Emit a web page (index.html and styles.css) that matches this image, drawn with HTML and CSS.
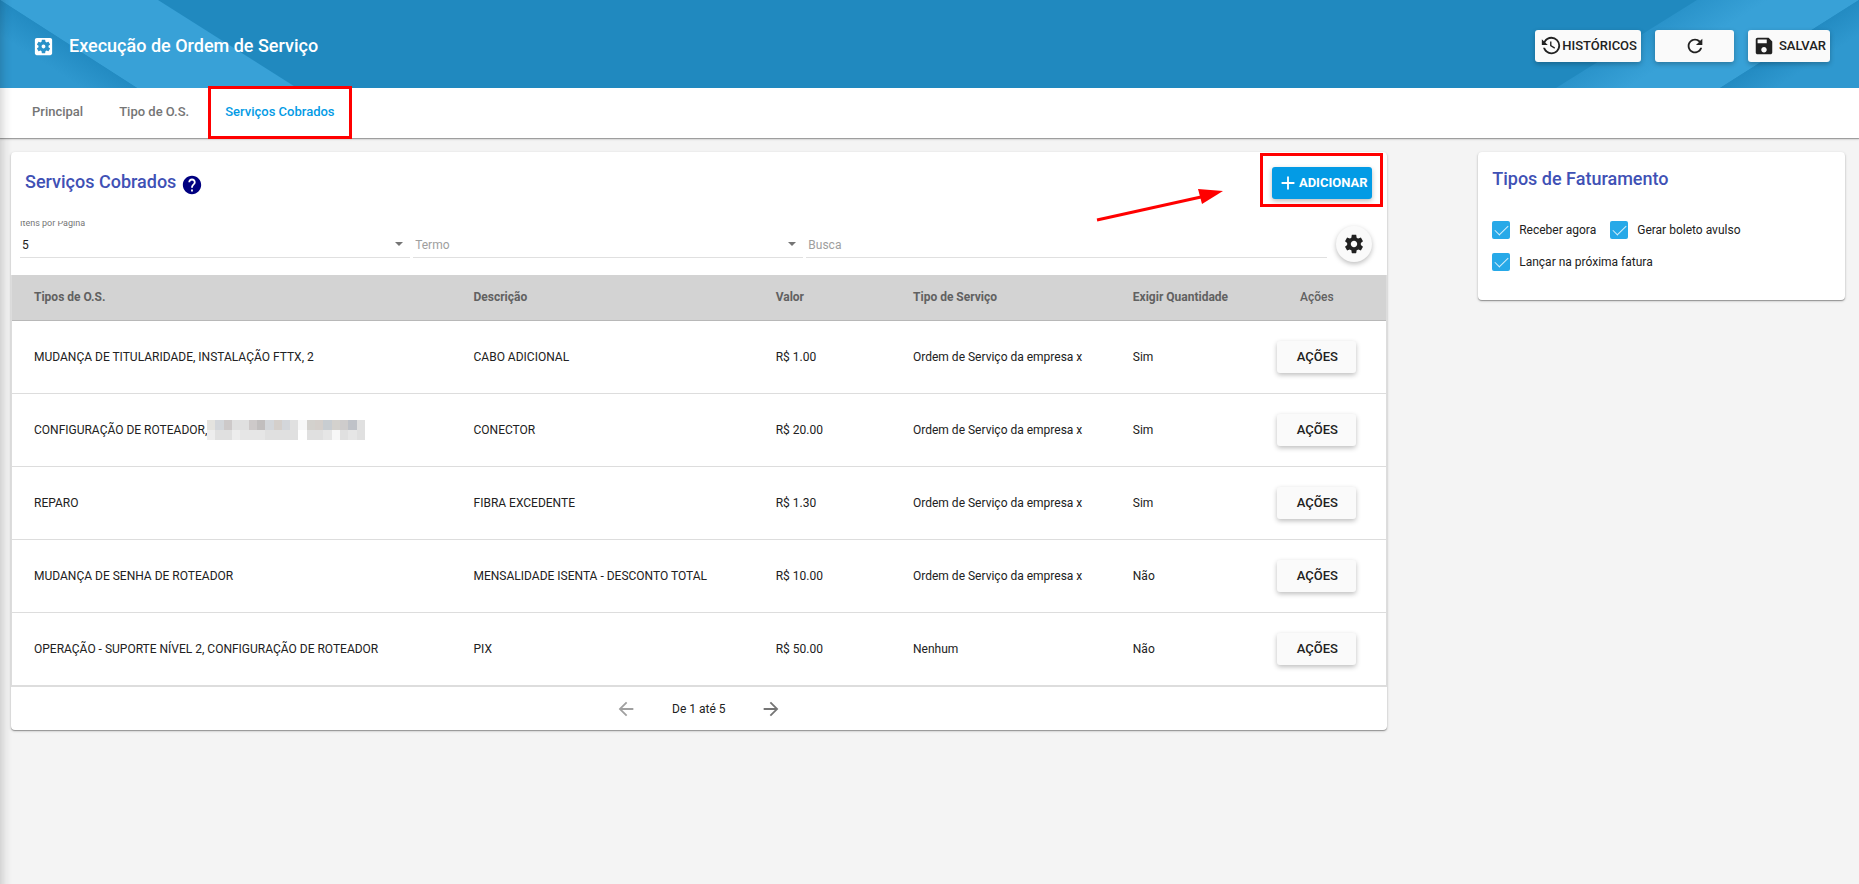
FILE: index.html
```html
<!DOCTYPE html>
<html lang="pt-BR">
<head>
<meta charset="utf-8">
<meta name="viewport" content="width=device-width, initial-scale=1">
<title>Execução de Ordem de Serviço</title>
<link rel="stylesheet" href="styles.css">
</head>
<body>
<header class="topbar">
  <svg class="topbar-art topbar-art-left" width="300" height="88" viewBox="0 0 300 88" aria-hidden="true">
    <defs>
      <linearGradient id="fold" gradientUnits="userSpaceOnUse" x1="68" y1="44" x2="52" y2="69">
        <stop offset="0" stop-color="#238bc2"/>
        <stop offset="1" stop-color="#2f98cf"/>
      </linearGradient>
    </defs>
    <path d="M0 0H158L297 88H137Z" fill="#38a1d7"/>
    <path d="M0 0L137 88H0Z" fill="url(#fold)"/>
  </svg>
  <svg class="topbar-art topbar-art-right" width="303" height="88" viewBox="0 0 303 88" aria-hidden="true">
    <defs>
      <linearGradient id="fold-right" gradientUnits="userSpaceOnUse" x1="234" y1="44" x2="250" y2="69">
        <stop offset="0" stop-color="#238bc2"/>
        <stop offset="1" stop-color="#2f98cf"/>
      </linearGradient>
      <linearGradient id="band-right" gradientUnits="userSpaceOnUse" x1="71" y1="44" x2="91" y2="76">
        <stop offset="0" stop-color="#2a93ca"/>
        <stop offset="1" stop-color="#38a1d7"/>
      </linearGradient>
    </defs>
    <path d="M141 0H303L164 88H0Z" fill="url(#band-right)"/>
    <path d="M303 0V88H164Z" fill="url(#fold-right)"/>
  </svg>
  <svg class="icon-app" viewBox="0 0 24 24" aria-hidden="true"><path d="M12 10c-1.100 0-2 .9-2 2s.9 2 2 2 2-.9 2-2-.9-2-2-2zm7-7H5c-1.110 0-2 .9-2 2v14c0 1.100.89 2 2 2h14c1.110 0 2-.9 2-2V5c0-1.100-.89-2-2-2zm-1.750 9c0 .23-.02.46-.05.68l1.480 1.160c.13.11.17.3.08.45l-1.400 2.420c-.09.15-.27.21-.43.15l-1.740-.7c-.36.28-.76.51-1.180.69l-.26 1.850c-.03.17-.18.3-.35.3h-2.800c-.17 0-.32-.13-.35-.29l-.26-1.850c-.43-.18-.82-.41-1.180-.69l-1.740.7c-.16.06-.34 0-.43-.15l-1.400-2.420c-.09-.15-.05-.34.08-.45l1.480-1.160c-.03-.23-.05-.46-.05-.69s.02-.46.05-.68l-1.480-1.160c-.13-.11-.17-.3-.08-.45l1.400-2.420c.09-.15.27-.21.43-.15l1.740.7c.36-.28.76-.51 1.180-.69l.26-1.850c.03-.17.18-.3.35-.3h2.800c.17 0 .32.13.35.29l.26 1.850c.43.18.82.41 1.180.69l1.740-.7c.16-.06.34 0 .43.15l1.400 2.420c.09.15.05.34-.08.45l-1.480 1.160c.03.23.05.46.05.69z"/></svg>
  <h1 class="topbar-title">Execução de Ordem de Serviço</h1>
  <div class="topbar-actions">
    <button type="button" class="btn"><svg class="icon" viewBox="0 0 24 24" aria-hidden="true"><path d="M11 7v5.110l4.710 2.790.79-1.280-4-2.370V7m0-5C8.970 2 5.910 3.920 4.270 6.770L2 4.500V11h6.500L5.750 8.250C6.960 5.730 9.500 4 12.500 4a7.500 7.500 0 0 1 7.500 7.500 7.500 7.500 0 0 1-7.500 7.500c-3.270 0-6.030-2.090-7.060-5h-2.100c1.100 4.030 4.770 7 9.160 7 5.240 0 9.500-4.250 9.500-9.500A9.500 9.500 0 0 0 12.500 2z"/></svg>HISTÓRICOS</button>
    <button type="button" class="btn btn-wide" aria-label="Atualizar"><svg class="icon" viewBox="0 0 24 24" aria-hidden="true"><path d="M17.650 6.350C16.200 4.900 14.210 4 12 4c-4.420 0-7.990 3.580-7.990 8s3.570 8 7.990 8c3.730 0 6.840-2.550 7.730-6h-2.080c-.82 2.330-3.040 4-5.650 4-3.310 0-6-2.690-6-6s2.690-6 6-6c1.660 0 3.140.69 4.220 1.780L13 11h7V4l-2.350 2.350z"/></svg></button>
    <button type="button" class="btn btn-spaced"><svg class="icon" viewBox="0 0 24 24" aria-hidden="true"><path d="M17 3H5c-1.110 0-2 .9-2 2v14c0 1.100.89 2 2 2h14c1.100 0 2-.9 2-2V7l-4-4zm-5 16c-1.660 0-3-1.340-3-3s1.340-3 3-3 3 1.340 3 3-1.340 3-3 3zm3-10H5V5h10v4z"/></svg>SALVAR</button>
  </div>
</header>

<nav class="tabs">
  <a class="tab" href="#principal">Principal</a>
  <a class="tab" href="#tipo">Tipo de O.S.</a>
  <a class="tab tab-active" href="#servicos" aria-current="page">Serviços Cobrados<span class="mark mark-tab"></span></a>
</nav>

<main class="content">
  <section class="card services">
    <div class="card-head">
      <h2 class="card-title">Serviços Cobrados</h2>
      <svg class="icon-help" viewBox="0 0 24 24" aria-hidden="true"><path d="M12 2C6.480 2 2 6.480 2 12s4.480 10 10 10 10-4.480 10-10S17.520 2 12 2zm1 17h-2v-2h2v2zm2.070-7.750l-.9.92C13.450 12.900 13 13.500 13 15h-2v-.5c0-1.100.45-2.100 1.170-2.830l1.240-1.260c.37-.36.59-.86.59-1.410 0-1.100-.9-2-2-2s-2 .9-2 2H8c0-2.210 1.790-4 4-4s4 1.790 4 4c0 .88-.36 1.680-.93 2.250z"/></svg>
      <div class="add-wrap">
        <button type="button" class="btn btn-primary"><svg class="icon" viewBox="0 0 24 24" aria-hidden="true"><path d="M19 13h-6v6h-2v-6H5v-2h6V5h2v6h6v2z"/></svg>ADICIONAR</button>
        <span class="mark mark-add"></span>
        <svg class="arrow" width="130" height="36" viewBox="0 0 130 36" aria-hidden="true"><path d="M2 33L106 10" stroke="#f00" stroke-width="3"/><path d="M103 2L128 4L107 17Z" fill="#f00"/></svg>
      </div>
    </div>

    <div class="filters">
      <div class="field">
        <label class="field-label" for="per-page">Itens por Página</label>
        <select id="per-page" class="field-input"><option>5</option></select>
        <span class="caret"></span>
      </div>
      <div class="field">
        <select class="field-input muted" aria-label="Termo"><option>Termo</option></select>
        <span class="caret"></span>
      </div>
      <div class="field field-search">
        <input class="field-input" type="text" placeholder="Busca" aria-label="Busca">
      </div>
      <button type="button" class="btn-round" aria-label="Configurações"><svg class="icon" viewBox="0 0 24 24" aria-hidden="true"><path d="M19.430 12.980c.04-.32.07-.64.07-.98s-.03-.66-.07-.98l2.110-1.650c.19-.15.24-.42.12-.64l-2-3.460c-.12-.22-.39-.3-.61-.22l-2.490 1c-.52-.4-1.080-.73-1.690-.98l-.38-2.650C14.460 2.180 14.250 2 14 2h-4c-.25 0-.46.18-.49.42l-.38 2.650c-.61.25-1.170.59-1.690.98l-2.490-1c-.23-.09-.49 0-.61.22l-2 3.460c-.13.22-.07.49.12.64l2.110 1.650c-.04.32-.07.65-.07.98s.03.66.07.98l-2.110 1.650c-.19.15-.24.42-.12.64l2 3.460c.12.22.39.3.61.22l2.490-1c.52.4 1.080.73 1.690.98l.38 2.650c.03.24.24.42.49.42h4c.25 0 .46-.18.49-.42l.38-2.650c.61-.25 1.170-.59 1.690-.98l2.490 1c.23.09.49 0 .61-.22l2-3.460c.12-.22.07-.49-.12-.64l-2.110-1.650zM12 15.500c-1.930 0-3.500-1.570-3.500-3.500s1.570-3.500 3.500-3.500 3.500 1.570 3.500 3.500-1.570 3.500-3.500 3.500z"/></svg></button>
    </div>

    <div class="table-frame">
    <table class="table">
      <colgroup><col class="col-types"><col class="col-desc"><col class="col-value"><col><col class="col-qty"><col class="col-actions"></colgroup>
      <thead>
        <tr><th>Tipos de O.S.</th><th>Descrição</th><th>Valor</th><th>Tipo de Serviço</th><th>Exigir Quantidade</th><th class="actions">Ações</th></tr>
      </thead>
      <tbody>
        <tr><td>MUDANÇA DE TITULARIDADE, INSTALAÇÃO FTTX, 2</td><td>CABO ADICIONAL</td><td>R$ 1.00</td><td>Ordem de Serviço da empresa x</td><td>Sim</td><td class="actions"><button type="button" class="btn btn-wide">AÇÕES</button></td></tr>
        <tr><td><span class="redacted">CONFIGURAÇÃO DE ROTEADOR,<svg class="mosaic" viewBox="0 0 19 2" preserveAspectRatio="none" shape-rendering="crispEdges" aria-hidden="true"><path fill="#e0e0e0" d="M0 0H11V2H0ZM12 0H19V2H12Z"/><path fill="#e4e3df" d="M0 0h1v1h-1z"/><path fill="#d3d6da" d="M1 0h1v1h-1zM7 0h1v1h-1zM9 0h1v1h-1z"/><path fill="#cdc9c9" d="M2 0h1v1h-1zM5 0h1v1h-1z"/><path fill="#c1bebe" d="M6 0h1v1h-1z"/><path fill="#d4cfcb" d="M8 0h1v1h-1zM13 0h1v1h-1z"/><path fill="#f7f7f7" d="M11 0h1v1h-1zM15 1h1v1h-1z"/><path fill="#c8cdd1" d="M14 0h1v1h-1z"/><path fill="#d3d1cd" d="M12 0h1v1h-1zM15 0h1v1h-1z"/><path fill="#cecccc" d="M16 0h1v1h-1z"/><path fill="#bfc2c8" d="M17 0h1v1h-1z"/><path fill="#ededed" d="M0 1h1v1h-1zM3 1h1v1h-1z"/><path fill="#e6e6e6" d="M4 1h3v1h-3zM14 1h1v1h-1zM17 1h1v1h-1z"/></svg></span></td><td>CONECTOR</td><td>R$ 20.00</td><td>Ordem de Serviço da empresa x</td><td>Sim</td><td class="actions"><button type="button" class="btn btn-wide">AÇÕES</button></td></tr>
        <tr><td>REPARO</td><td>FIBRA EXCEDENTE</td><td>R$ 1.30</td><td>Ordem de Serviço da empresa x</td><td>Sim</td><td class="actions"><button type="button" class="btn btn-wide">AÇÕES</button></td></tr>
        <tr><td>MUDANÇA DE SENHA DE ROTEADOR</td><td>MENSALIDADE ISENTA - DESCONTO TOTAL</td><td>R$ 10.00</td><td>Ordem de Serviço da empresa x</td><td>Não</td><td class="actions"><button type="button" class="btn btn-wide">AÇÕES</button></td></tr>
        <tr><td>OPERAÇÃO - SUPORTE NÍVEL 2, CONFIGURAÇÃO DE ROTEADOR</td><td>PIX</td><td>R$ 50.00</td><td>Nenhum</td><td>Não</td><td class="actions"><button type="button" class="btn btn-wide">AÇÕES</button></td></tr>
      </tbody>
    </table>
    </div>

    <div class="pager">
      <button type="button" class="pager-btn" aria-label="Página anterior" disabled><svg class="icon" viewBox="0 0 24 24" aria-hidden="true"><path d="M20 11H7.830l5.590-5.590L12 4l-8 8 8 8 1.410-1.410L7.830 13H20v-2z"/></svg></button>
      <span>De 1 até 5</span>
      <button type="button" class="pager-btn" aria-label="Próxima página"><svg class="icon" viewBox="0 0 24 24" aria-hidden="true"><path d="M12 4l-1.410 1.410L16.170 11H4v2h12.170l-5.580 5.590L12 20l8-8z"/></svg></button>
    </div>
  </section>

  <section class="card billing">
    <h2 class="card-title">Tipos de Faturamento</h2>
    <div class="checks">
      <label class="check"><input type="checkbox" checked>Receber agora</label>
      <label class="check"><input type="checkbox" checked>Gerar boleto avulso</label>
      <label class="check"><input type="checkbox" checked>Lançar na próxima fatura</label>
    </div>
  </section>
</main>
</body>
</html>
```

FILE: styles.css
```css
* { box-sizing: border-box; }

body {
  margin: 0;
  min-height: 100vh;
  background: #f4f4f4;
  color: #212121;
  font-family: Roboto, "Liberation Sans", sans-serif;
  font-size: 12px;
  line-height: 16px;
}

body::after {
  content: "";
  position: fixed;
  top: 0;
  bottom: 0;
  left: 0;
  width: 12px;
  background: linear-gradient(to right, rgba(0, 0, 0, .13), rgba(0, 0, 0, .04) 50%, transparent);
  pointer-events: none;
}

button, input, select { font: inherit; color: inherit; }
h1, h2 { margin: 0; }
svg { fill: currentColor; flex: none; }
.icon { width: 22px; height: 22px; }

/* Top bar */
.topbar {
  position: relative;
  display: flex;
  align-items: center;
  height: 88px;
  padding: 4px 29px 0 32px;
  background: #2089bf;
  color: #fff;
}
.topbar-art { position: absolute; top: 0; }
.topbar-art-left { left: 0; }
.topbar-art-right { right: 0; }
.icon-app { position: relative; width: 23px; height: 23px; }
.topbar-title {
  position: relative;
  margin-left: 14px;
  font-size: 18px;
  font-weight: 500;
  line-height: 24px;
}
.topbar-actions {
  position: relative;
  display: flex;
  gap: 14px;
  margin-left: auto;
}

/* Buttons */
.btn {
  display: inline-flex;
  align-items: center;
  justify-content: center;
  height: 32px;
  padding: 0 4px 0 5px;
  border: 0;
  border-radius: 3px;
  background: #fafafa;
  color: #212121;
  box-shadow: 0 2px 5px rgba(0, 0, 0, .26);
  font-size: 13px;
  font-weight: 500;
  white-space: nowrap;
}
.btn-wide { min-width: 79px; }
.btn-spaced { gap: 4px; }
.btn-primary { background: #039be5; color: #fff; font-weight: 700; }
.btn-round {
  display: flex;
  align-items: center;
  justify-content: center;
  width: 36px;
  height: 36px;
  margin-left: 6px;
  padding: 0;
  border: 0;
  border-radius: 50%;
  background: #fafafa;
  box-shadow: 0 2px 5px rgba(0, 0, 0, .26);
}

/* Tabs */
.tabs {
  display: flex;
  gap: 8px;
  height: 50px;
  padding-left: 18px;
  background: #fff;
  box-shadow: 0 1px 1px rgba(0, 0, 0, .3), 0 2px 2px rgba(0, 0, 0, .08);
}
.tab {
  position: relative;
  padding: 16px 14px 0;
  color: #757575;
  font-size: 13px;
  font-weight: 500;
  text-decoration: none;
}
.tab-active { color: #039be5; box-shadow: inset 0 -1px #3f51b5; }

/* Red call-outs */
.mark {
  position: absolute;
  border: 3px solid #f00;
  pointer-events: none;
}
.mark-tab { inset: -2px -3px -1px -3px; }
.mark-add { inset: -14px -11px -8px -12px; }
.arrow { position: absolute; right: 147px; top: 20px; }

/* Page body */
.content {
  display: flex;
  align-items: flex-start;
  justify-content: space-between;
  padding: 14px 14px 0 11px;
}
.card {
  background: #fff;
  border-radius: 4px;
  box-shadow: 0 1px 3px rgba(0, 0, 0, .2), 0 1px 1px rgba(0, 0, 0, .3);
}
.card-title { color: #3f51b5; font-size: 18px; font-weight: 500; line-height: 24px; }
.services { flex: 0 1 75%; }
.billing { flex: 0 1 20%; padding: 15px 14px 29px; }

.card-head {
  display: flex;
  align-items: center;
  padding: 15px 15px 0 14px;
}
.card-head .card-title { padding-bottom: 2px; }
.icon-help { width: 22px; height: 22px; margin: 4px 0 0 5px; color: #000080; }
.add-wrap { position: relative; display: flex; margin-left: auto; }

/* Filters */
.filters {
  display: flex;
  align-items: flex-end;
  gap: 3px;
  padding: 22px 15px 17px 9px;
}
.field {
  position: relative;
  flex: 3 1 0;
  border-bottom: 1px solid #e0e0e0;
}
.field-search { flex-grow: 4; }
.field-label {
  display: flex;
  align-items: flex-end;
  height: 8px;
  overflow: hidden;
  color: #757575;
  font-size: 9px;
  line-height: 11px;
}
.field-input {
  display: block;
  appearance: none;
  width: 100%;
  height: 28px;
  padding: 4px 2px 0;
  border: 0;
  background: transparent;
  outline: 0;
}
.field-input.muted, .field-input::placeholder { color: #9e9e9e; opacity: 1; }
.caret {
  position: absolute;
  right: 7px;
  bottom: 11px;
  border: 4px solid transparent;
  border-top-color: #757575;
  border-bottom: 0;
}
.filters .btn-round { margin-bottom: -4px; }

/* Table */
.table-frame { border: 1px solid #ddd; border-top: 0; }
.table {
  width: 100%;
  border-collapse: separate;
  border-spacing: 0;
  table-layout: fixed;
}
.col-types { width: 32%; }
.col-desc { width: 22%; }
.col-value, .col-qty, .col-actions { width: 10%; }
.table th {
  height: 46px;
  padding: 0 0 2px 22px;
  background: #d3d3d3;
  border-bottom: 1px solid #b8b8b8;
  color: #616161;
  font-weight: 700;
  text-align: left;
  white-space: nowrap;
}
.table td {
  height: 73px;
  padding: 0 0 0 22px;
  border-bottom: 1px solid #ddd;
  white-space: nowrap;
}
.table .actions { padding-left: 0; text-align: center; }
.table th.actions { font-weight: 500; }
.redacted { display: flex; align-items: center; }
.mosaic { width: 158px; height: 20px; }

/* Pager */
.pager {
  display: flex;
  align-items: center;
  justify-content: center;
  gap: 34px;
  height: 43px;
}
.pager-btn {
  display: flex;
  padding: 1px;
  border: 0;
  background: transparent;
  color: #757575;
}
.pager-btn:disabled { color: #a0a0a0; }

/* Billing options */
.checks {
  display: flex;
  flex-wrap: wrap;
  gap: 14px;
  margin-top: 30px;
}
.check { display: flex; align-items: center; gap: 9px; height: 18px; }
.check input {
  appearance: none;
  position: relative;
  width: 18px;
  height: 18px;
  margin: 0;
  border-radius: 2px;
  background: #27a9e8;
}
.check input::after {
  content: "";
  position: absolute;
  left: 6px;
  top: 1px;
  width: 6px;
  height: 12px;
  border: solid #d4eefa;
  border-width: 0 1px 1px 0;
  transform: rotate(45deg);
}
```
